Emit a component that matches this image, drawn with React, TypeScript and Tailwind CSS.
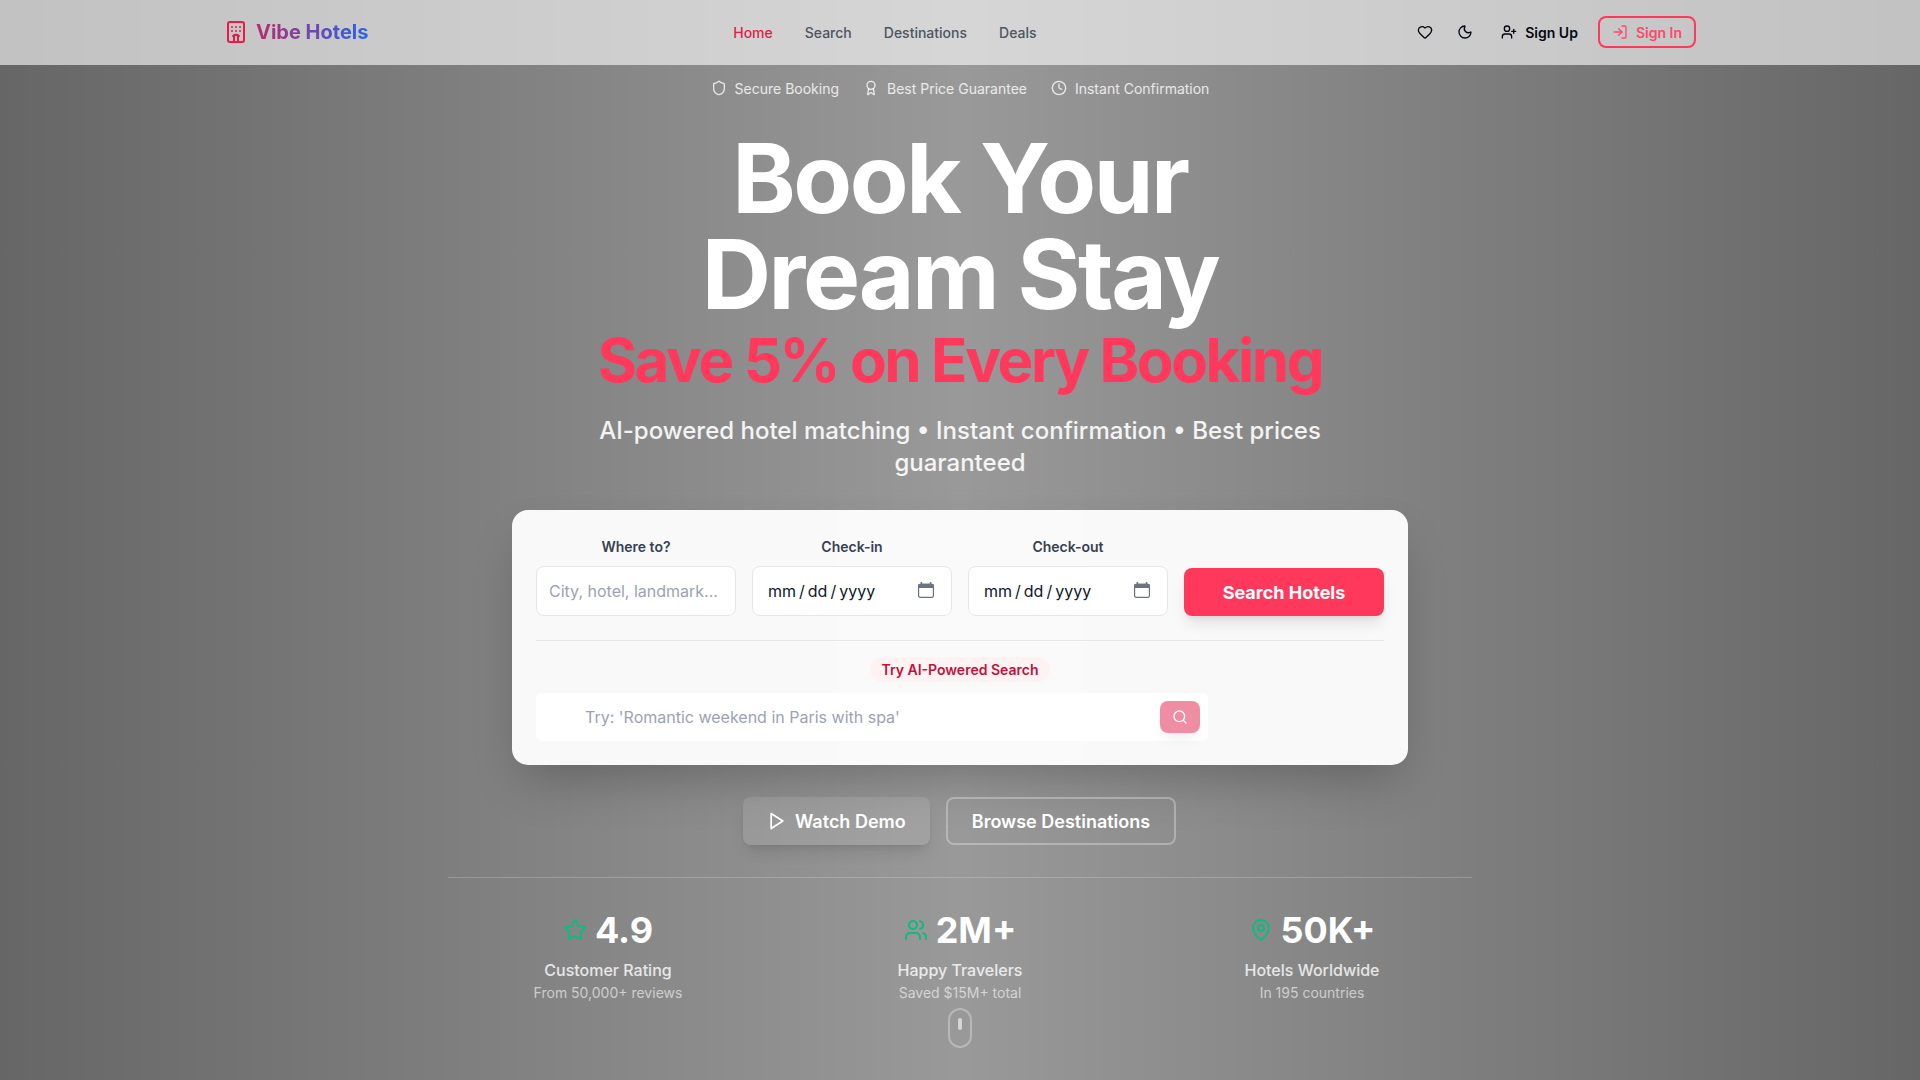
import React from "react";
import {
  Award,
  Clock,
  Heart,
  Hotel,
  LogIn,
  MapPin,
  Moon,
  Search,
  Shield,
  Star,
  UserPlus,
  Users,
} from "lucide-react";

const navLinks = ["Home", "Search", "Destinations", "Deals"];

const badges = [
  { icon: Shield, label: "Secure Booking" },
  { icon: Award, label: "Best Price Guarantee" },
  { icon: Clock, label: "Instant Confirmation" },
];

const stats = [
  { icon: Star, value: "4.9", label: "Customer Rating", note: "From 50,000+ reviews" },
  { icon: Users, value: "2M+", label: "Happy Travelers", note: "Saved $15M+ total" },
  { icon: MapPin, value: "50K+", label: "Hotels Worldwide", note: "In 195 countries" },
];

function PlayIcon() {
  return (
    <svg
      className="size-5"
      viewBox="0 0 24 24"
      fill="none"
      stroke="currentColor"
      strokeWidth="2"
      strokeLinecap="round"
      strokeLinejoin="round"
    >
      <polygon points="5 3 19 12 5 21 5 3" />
    </svg>
  );
}

function CalendarIcon() {
  return (
    <svg className="size-4 text-[#6b7280]" viewBox="0 0 16 16" fill="none">
      <path d="M2.7 0h1.5v2H2.7zM11.8 0h1.5v2h-1.5z" fill="currentColor" />
      <path d="M0 4a2.2 2.2 0 0 1 2.2-2.2h11.6A2.2 2.2 0 0 1 16 4v2H0z" fill="currentColor" />
      <rect x="0.6" y="2.4" width="14.8" height="13" rx="1.7" stroke="currentColor" strokeWidth="1.2" />
    </svg>
  );
}

function Header() {
  return (
    <header className="absolute inset-x-0 top-0 z-10 h-[65px] bg-white/60">
      <div className="mx-auto flex h-16 max-w-[1536px] items-center justify-between px-8">
        <a className="flex items-center gap-2 bg-linear-to-r/srgb from-[#e11d48] to-[#2563eb] bg-clip-text text-xl font-bold text-transparent">
          <Hotel className="size-6 text-[#e11d48]" />
          <span>Vibe Hotels</span>
        </a>
        <nav className="flex items-center gap-8 pt-0.5 text-sm font-medium text-[#4b5563]">
          {navLinks.map((label) => (
            <a key={label} className="first:text-[#e11d48]">
              {label}
            </a>
          ))}
        </nav>
        <div className="flex items-center gap-2 pl-2 text-sm font-semibold text-[#030712]">
          <button className="flex size-8 items-center justify-center">
            <Heart className="size-4" />
          </button>
          <button className="flex size-8 items-center justify-center">
            <Moon className="size-4" />
          </button>
          <button className="flex h-8 items-center gap-2 px-3">
            <UserPlus className="size-4" />
            <span className="pt-0.5">Sign Up</span>
          </button>
          <button className="flex h-8 items-center gap-2 rounded-lg border-2 border-[#ff385c] px-3 text-[#ff4869]">
            <LogIn className="size-4" />
            <span className="pt-0.5">Sign In</span>
          </button>
        </div>
      </div>
    </header>
  );
}

function FieldLabel({ children }: { children: React.ReactNode }) {
  return <label className="mb-2 block h-6 pt-[3px] text-sm font-semibold text-[#374151]">{children}</label>;
}

function DateField({ label }: { label: string }) {
  return (
    <div>
      <FieldLabel>{label}</FieldLabel>
      <div className="flex h-[50px] items-center justify-between rounded-lg border border-[#e5e7eb] bg-white pr-[17px] pl-[15px] text-base text-[#111827]">
        <div className="flex gap-[3px]">
          <span>mm</span>
          <span>/</span>
          <span>dd</span>
          <span>/</span>
          <span>yyyy</span>
        </div>
        <div className="mb-0.5">
          <CalendarIcon />
        </div>
      </div>
    </div>
  );
}

function SearchCard() {
  return (
    <div className="w-full max-w-4xl rounded-2xl bg-white/95 p-6 shadow-2xl">
      <div className="grid grid-cols-4 items-end gap-4">
        <div>
          <FieldLabel>Where to?</FieldLabel>
          <input
            placeholder="City, hotel, landmark..."
            className="block h-[50px] w-full rounded-lg border border-[#e5e7eb] bg-white px-3 text-base placeholder:text-[#9ca3af]"
          />
        </div>
        <DateField label="Check-in" />
        <DateField label="Check-out" />
        <button className="h-12 rounded-lg bg-[#ff385c] pt-0.5 text-lg font-bold text-white shadow-lg">
          Search Hotels
        </button>
      </div>
      <div className="mt-6 border-t border-[#e5e7eb] pt-4">
        <div className="mb-3 h-6">
          <span className="rounded-full bg-[#fef2f2] px-3 py-1 text-sm font-semibold text-[#be123c]">
            Try AI-Powered Search
          </span>
        </div>
        <div className="relative max-w-2xl">
          <input
            placeholder="Try: 'Romantic weekend in Paris with spa'"
            className="block h-12 w-full rounded-md border border-white bg-white pr-14 pl-12 text-base placeholder:text-[#9ca3af]"
          />
          <button className="absolute top-2 right-2 flex h-8 w-10 items-center justify-center rounded-lg bg-[#e11d48] text-white opacity-50 shadow-lg">
            <Search className="size-4" />
          </button>
        </div>
      </div>
    </div>
  );
}

export default function App() {
  return (
    <div
      className="relative flex h-[1080px] w-full flex-col items-center overflow-hidden bg-white text-center"
      style={{ fontFamily: 'Inter, "Liberation Sans", sans-serif' }}
    >
      <Header />
      <main className="flex h-full w-full flex-col items-center bg-linear-to-r/srgb from-black/60 via-black/40 to-black/60 pt-[78px]">
        <div className="mb-[31px] flex gap-6 text-sm text-white/80">
          {badges.map(({ icon: Icon, label }) => (
            <div key={label} className="flex items-start gap-2">
              <Icon className="mt-0.5 size-4" />
              <span className="pt-px">{label}</span>
            </div>
          ))}
        </div>
        <h1 className="mb-6 text-8xl leading-none font-bold tracking-tight text-white">
          Book Your
          <br />
          Dream Stay
          <span className="mt-2 block text-6xl leading-none text-[#ff385c]">Save 5% on Every Booking</span>
        </h1>
        <p className="mb-[31px] max-w-3xl pt-px text-2xl font-medium text-white/90">
          AI-powered hotel matching • Instant confirmation • Best prices guaranteed
        </p>
        <SearchCard />
        <div className="mt-8 flex gap-4 pr-px text-lg font-semibold text-white">
          <button className="flex h-12 w-[187px] items-center gap-2 rounded-lg bg-white/10 pl-6 whitespace-nowrap shadow-lg">
            <PlayIcon />
            <span className="pt-0.5">Watch Demo</span>
          </button>
          <button className="h-12 w-[230px] rounded-lg border-2 border-white/30 pt-0.5 whitespace-nowrap">
            Browse Destinations
          </button>
        </div>
        <div className="mt-8 grid w-full max-w-5xl grid-cols-3 gap-8 border-t border-white/20 pt-8">
          {stats.map(({ icon: Icon, value, label, note }) => (
            <div key={label}>
              <div className="mb-2 flex h-10 items-center justify-center gap-2">
                <Icon className="size-6 text-[#10b981]" />
                <span className="text-4xl font-bold text-white">{value}</span>
              </div>
              <div className="text-base font-medium text-white/80">{label}</div>
              <div className="pt-px text-sm text-white/60">{note}</div>
            </div>
          ))}
        </div>
      </main>
      <div className="absolute bottom-8 flex h-10 w-6 justify-center rounded-full border-2 border-white/30">
        <div className="mt-2 h-3 w-1 rounded-full bg-white/60" />
      </div>
    </div>
  );
}
